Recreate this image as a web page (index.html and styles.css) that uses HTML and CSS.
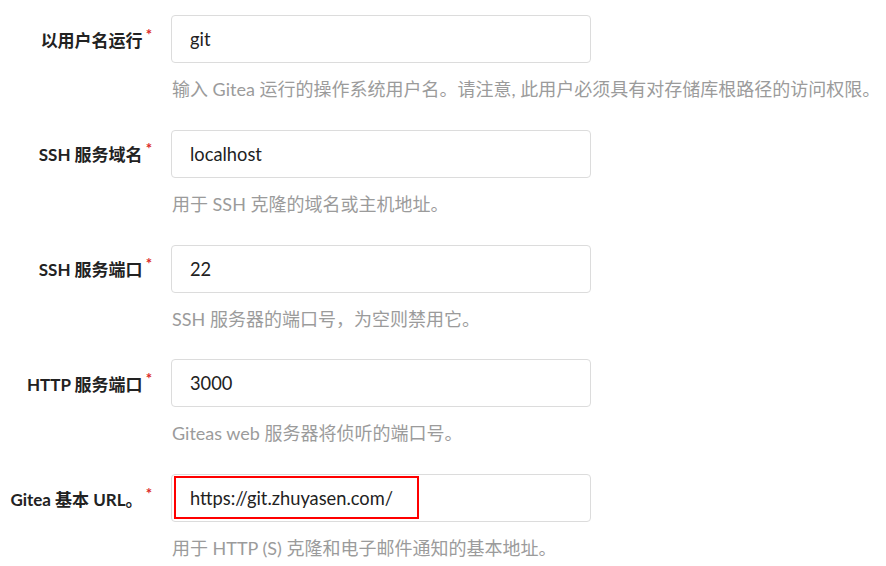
FILE: index.html
```html
<!DOCTYPE html>
<html lang="zh-CN">
<head>
<meta charset="utf-8">
<title>Gitea 安装</title>
<link rel="stylesheet" href="styles.css">
</head>
<body>
<form class="install-form">
  <div class="field">
    <div class="row">
      <label class="label required">以用户名运行</label>
      <div class="input-wrap"><input class="input" type="text" value="git"></div>
    </div>
    <div class="help">输入 Gitea 运行的操作系统用户名。请注意, 此用户必须具有对存储库根路径的访问权限。</div>
  </div>
  <div class="field">
    <div class="row">
      <label class="label required">SSH 服务域名</label>
      <div class="input-wrap"><input class="input" type="text" value="localhost"></div>
    </div>
    <div class="help">用于 SSH 克隆的域名或主机地址。</div>
  </div>
  <div class="field">
    <div class="row">
      <label class="label required">SSH 服务端口</label>
      <div class="input-wrap"><input class="input" type="text" value="22"></div>
    </div>
    <div class="help">SSH 服务器的端口号，为空则禁用它。</div>
  </div>
  <div class="field">
    <div class="row">
      <label class="label required">HTTP 服务端口</label>
      <div class="input-wrap"><input class="input" type="text" value="3000"></div>
    </div>
    <div class="help">Giteas web 服务器将侦听的端口号。</div>
  </div>
  <div class="field">
    <div class="row">
      <label class="label required">Gitea 基本 URL。</label>
      <div class="input-wrap">
        <input class="input" type="text" value="https://git.zhuyasen.com/">
        <span class="highlight"></span>
      </div>
    </div>
    <div class="help">用于 HTTP (S) 克隆和电子邮件通知的基本地址。</div>
  </div>
</form>
</body>
</html>
```
FILE: styles.css
```css
html, body {
  margin: 0;
  padding: 0;
  background: #ffffff;
}
body {
  font-family: Lato, "Noto Sans CJK SC", sans-serif;
  color: rgba(0, 0, 0, 0.87);
}
.install-form {
  padding-top: 15px;
}
.field {
  margin-bottom: 28.75px;
}
.row {
  display: flex;
  align-items: center;
}
.label {
  width: 152px;
  text-align: right;
  font-size: 17px;
  font-weight: 700;
  color: #222;
  white-space: nowrap;
  margin-right: 19px;
}
.required::after {
  content: "*";
  color: #db2828;
  font-size: 15px;
  position: relative;
  top: -7px;
  margin-left: 3px;
}
.input-wrap {
  position: relative;
  width: 420px;
}
.input {
  display: block;
  box-sizing: border-box;
  width: 100%;
  height: 48px;
  padding: 0 18px;
  border: 1px solid #dcdcdc;
  border-radius: 4px;
  font-family: Lato, "Noto Sans CJK SC", sans-serif;
  font-size: 18.3px;
  color: #222;
  background: #fff;
  outline: none;
}
.highlight {
  position: absolute;
  left: 3px;
  top: 2px;
  width: 245px;
  height: 43px;
  box-sizing: border-box;
  border: 2px solid #ff0000;
  pointer-events: none;
}
.help {
  margin-top: 14px;
  margin-left: 172px;
  line-height: 24px;
  font-size: 18px;
  color: #9b9b9b;
  white-space: nowrap;
}
```
